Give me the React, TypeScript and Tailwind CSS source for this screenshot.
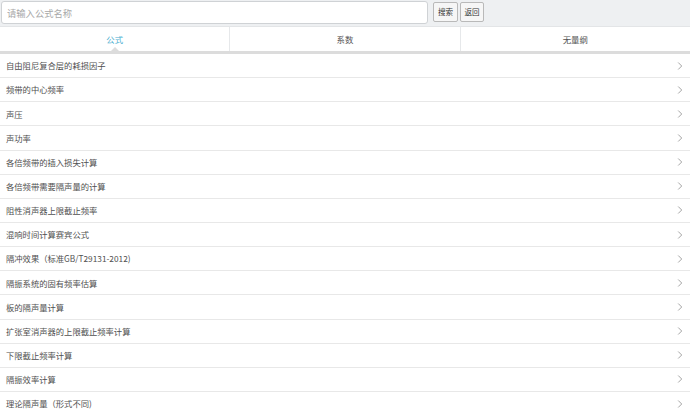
import React, { useState } from "react";

const formulas = [
  "自由阻尼复合层的耗损因子",
  "频带的中心频率",
  "声压",
  "声功率",
  "各倍频带的插入损失计算",
  "各倍频带需要隔声量的计算",
  "阻性消声器上限截止频率",
  "混响时间计算赛宾公式",
  "隔冲效果（标准GB/T29131-2012)",
  "隔振系统的固有频率估算",
  "板的隔声量计算",
  "扩张室消声器的上限截止频率计算",
  "下限截止频率计算",
  "隔振效率计算",
  "理论隔声量（形式不同)",
];

const tabs = ["公式", "系数", "无量纲"];

const Chevron: React.FC = () => (
  <svg width="6" height="10" viewBox="0 0 6 10" className="shrink-0">
    <path d="M1.2 1.5l3.5 3.5-3.5 3.5" fill="none" stroke="#a5a5a5" strokeWidth="1" />
  </svg>
);

const App: React.FC = () => {
  const [active, setActive] = useState(0);
  const [query, setQuery] = useState("");
  return (
    <div
      className="w-[690px] h-[415px] overflow-hidden bg-white text-[#555]"
      style={{ fontFamily: '"Noto Sans CJK SC", "Liberation Sans", sans-serif' }}
    >
      {/* search bar */}
      <div className="h-[27px] bg-[#eef0f2] border-b border-[#e3e5e7] flex items-start pt-px pl-px">
        <input
          value={query}
          onChange={(e) => setQuery(e.target.value)}
          placeholder="请输入公式名称"
          className="w-[427px] h-[23px] bg-white border border-[#cfd2d5] rounded-[3px] px-[5px] text-[9.3px] outline-none placeholder:text-[#a8a8a8]"
        />
        <div className="flex gap-[2px] ml-[5px] mt-[1px]">
          <button className="w-[25px] h-[20px] border border-[#b9b9b9] bg-[#f6f6f6] text-[7.5px] text-[#333] rounded-[2px]">
            搜索
          </button>
          <button className="w-[24px] h-[20px] border border-[#b9b9b9] bg-[#f6f6f6] text-[7.5px] text-[#333] rounded-[2px]">
            返回
          </button>
        </div>
      </div>

      {/* tabs */}
      <div className="flex h-[24px] bg-white">
        {tabs.map((t, i) => (
          <button
            key={t}
            onClick={() => setActive(i)}
            className={`relative flex-1 flex items-center justify-center text-[8.4px] ${
              i < tabs.length - 1 ? "border-r border-[#e6e8ea]" : ""
            } ${active === i ? "text-[#4aaed0]" : "text-[#555]"}`}
          >
            {t}
            {active === i && (
              <span className="absolute bottom-0 left-1/2 -translate-x-1/2 w-0 h-0 border-l-[4px] border-r-[4px] border-b-[4px] border-l-transparent border-r-transparent border-b-[#dcdcdc]" />
            )}
          </button>
        ))}
      </div>
      <div className="h-[3px] bg-[#dcdcdc]" />

      {/* list */}
      <div className="flex flex-col">
        {formulas.map((f) => (
          <div
            key={f}
            className="h-[24.15px] flex items-center justify-between pl-[6px] pr-[7px] border-b border-[#e8e8e8] text-[8.3px] text-[#505050]"
          >
            <span>{f}</span>
            <Chevron />
          </div>
        ))}
      </div>
    </div>
  );
};

export default App;
